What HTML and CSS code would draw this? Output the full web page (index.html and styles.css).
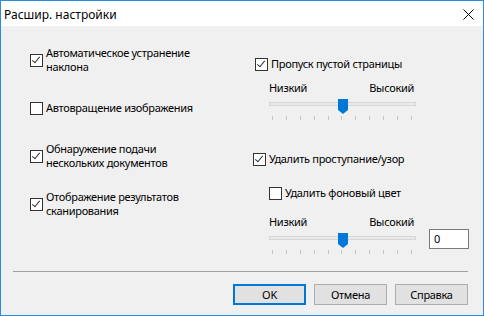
FILE: index.html
```html
<!DOCTYPE html>
<html lang="ru">
<head>
    <meta charset="UTF-8">
    <title>Расшир. настройки</title>
    <link rel="stylesheet" href="styles.css">
</head>
<body>
    <div class="window">
        <div class="titlebar">
            <span class="title">Расшир. настройки</span>
            <svg class="close" width="11" height="11" viewBox="0 0 11 11">
                <path d="M0.5 0.5 L10.5 10.5 M10.5 0.5 L0.5 10.5" stroke="#000" stroke-width="1"/>
            </svg>
        </div>

        <div class="content">
            <div class="col-left">
                <label class="check">
                    <span class="box on"></span>
                    <span class="text">Автоматическое устранение<br>наклона</span>
                </label>
                <label class="check">
                    <span class="box"></span>
                    <span class="text">Автовращение изображения</span>
                </label>
                <label class="check">
                    <span class="box on"></span>
                    <span class="text">Обнаружение подачи<br>нескольких документов</span>
                </label>
                <label class="check">
                    <span class="box on"></span>
                    <span class="text">Отображение результатов<br>сканирования</span>
                </label>
            </div>

            <div class="col-right">
                <label class="check skip-blank">
                    <span class="box on"></span>
                    <span class="text">Пропуск пустой страницы</span>
                </label>

                <div class="slider slider-blank">
                    <div class="slider-labels"><span>Низкий</span><span>Высокий</span></div>
                    <div class="slider-rail">
                        <div class="track"></div>
                        <svg class="thumb" width="10" height="15" viewBox="0 0 10 15">
                            <polygon points="0,0 10,0 10,11 5,15 0,11" fill="#0078d7"/>
                        </svg>
                    </div>
                    <div class="ticks">
                        <i></i><i></i><i></i><i></i><i></i><i></i><i></i><i></i><i></i><i></i><i></i>
                    </div>
                </div>

                <label class="check bleed">
                    <span class="box on"></span>
                    <span class="text">Удалить проступание/узор</span>
                </label>
                <label class="check bg-color">
                    <span class="box"></span>
                    <span class="text">Удалить фоновый цвет</span>
                </label>

                <div class="slider-row">
                    <div class="slider">
                        <div class="slider-labels"><span>Низкий</span><span>Высокий</span></div>
                        <div class="slider-rail">
                            <div class="track"></div>
                            <svg class="thumb" width="10" height="15" viewBox="0 0 10 15">
                                <polygon points="0,0 10,0 10,11 5,15 0,11" fill="#0078d7"/>
                            </svg>
                        </div>
                        <div class="ticks">
                            <i></i><i></i><i></i><i></i><i></i><i></i><i></i><i></i><i></i><i></i><i></i>
                        </div>
                    </div>
                    <div class="num-input">0</div>
                </div>
            </div>
        </div>

        <div class="footer">
            <div class="separator"></div>
            <div class="buttons">
                <button class="btn default">OK</button>
                <button class="btn">Отмена</button>
                <button class="btn">Справка</button>
            </div>
        </div>
    </div>
</body>
</html>
```

FILE: styles.css
```css
body {
    margin: 0;
    padding: 0;
    font-family: "Noto Sans", "Open Sans", sans-serif;
    font-size: 11px;
    letter-spacing: -0.3px;
    color: #000;
    background-color: #f0f0f0;
}

.window {
    width: 484px;
    height: 316px;
    box-sizing: border-box;
    border: 1px solid #2b8ce0;
    background-color: #f0f0f0;
    display: flex;
    flex-direction: column;
}

.titlebar {
    height: 25px;
    background-color: #fff;
    display: flex;
    align-items: center;
    justify-content: space-between;
    padding: 0 9px 0 3px;
    flex-shrink: 0;
}

.title {
    font-size: 12px;
    letter-spacing: 0;
    margin-top: 1px;
}

.close {
    margin-top: 1px;
}

.content {
    height: 245px;
    display: grid;
    grid-template-columns: 225px 1fr;
    padding-left: 29px;
}

.col-left {
    padding-top: 10px;
    display: grid;
    grid-template-rows: repeat(4, 48px);
}

.check {
    display: flex;
    align-items: center;
    line-height: 14px;
}

.box {
    width: 11px;
    height: 11px;
    border: 1px solid #333;
    background-color: #fff;
    margin-right: 3px;
    flex-shrink: 0;
    position: relative;
}

.box.on::after {
    content: "";
    position: absolute;
    left: 3px;
    top: 0px;
    width: 3px;
    height: 7px;
    border: solid #333;
    border-width: 0 1px 1px 0;
    transform: rotate(40deg);
}

.col-right {
    padding-top: 10px;
    display: flex;
    flex-direction: column;
}

.skip-blank {
    margin-top: 21px;
    height: 14px;
}

.slider {
    width: 147px;
    margin-left: 14px;
}

.slider-blank {
    margin-top: 10px;
}

.slider-labels {
    display: flex;
    justify-content: space-between;
    line-height: 14px;
    padding-right: 2px;
}

.slider-rail {
    position: relative;
    height: 16px;
    margin-top: 2px;
}

.track {
    position: absolute;
    left: 0;
    right: 0;
    top: 5px;
    height: 2px;
    background-color: #e7eaea;
    border: 1px solid #d6d6d6;
}

.thumb {
    position: absolute;
    left: 69px;
    top: 2px;
}

.ticks {
    display: flex;
    justify-content: space-between;
    padding: 0 4px 0 3px;
    margin-top: 3px;
    height: 4px;
}

.ticks i {
    width: 1px;
    height: 4px;
    background-color: #c4c4c4;
}

.bleed {
    margin-top: 32px;
    margin-left: -2px;
    height: 14px;
}

.bg-color {
    margin-top: 20px;
    margin-left: 14px;
    height: 14px;
}

.slider-row {
    display: flex;
    margin-top: 15px;
}

.num-input {
    width: 34px;
    height: 18px;
    margin: 14px 0 0 13px;
    border: 1px solid #7a7a7a;
    background-color: #fff;
    padding-left: 4px;
    line-height: 18px;
}

.footer {
    display: flex;
    flex-direction: column;
}

.separator {
    height: 1px;
    margin: 0 15px 0 12px;
    background-color: #a0a0a0;
}

.buttons {
    display: flex;
    justify-content: flex-end;
    gap: 8px;
    margin: 12px 15px 0 0;
}

.btn {
    width: 73px;
    height: 21px;
    font-family: "Noto Sans", "Open Sans", sans-serif;
    font-size: 11px;
    letter-spacing: -0.3px;
    color: #000;
    background-color: #e1e1e1;
    border: 1px solid #adadad;
    padding: 0;
}

.btn.default {
    border: 2px solid #0078d7;
}
```
